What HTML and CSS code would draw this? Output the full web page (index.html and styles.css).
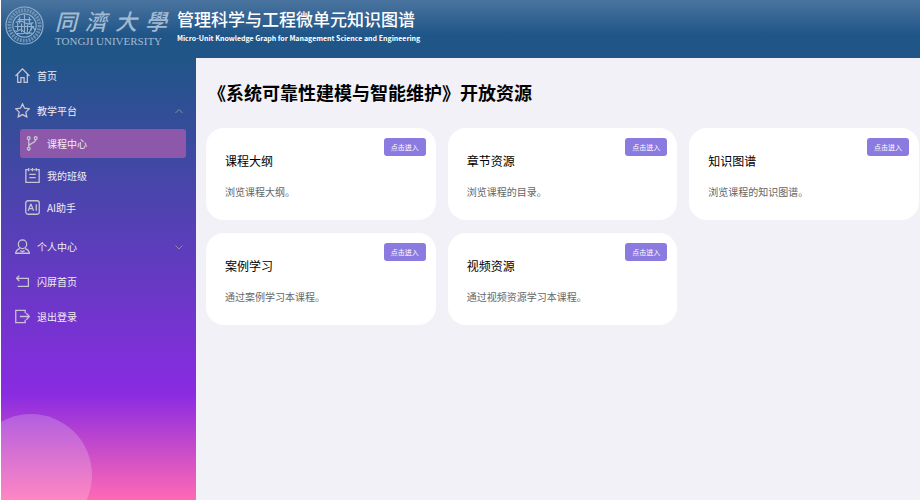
FILE: index.html
```html
<!DOCTYPE html>
<html lang="zh-CN">
<head>
  <meta charset="UTF-8">
  <meta name="viewport" content="width=device-width, initial-scale=1.0">
  <title>管理科学与工程微单元知识图谱</title>
  <link rel="stylesheet" href="styles.css">
</head>
<body>
  <header class="header">
    <svg class="emblem" viewBox="0 0 40 40" aria-hidden="true">
      <circle cx="20" cy="20" r="19"/>
      <circle cx="20" cy="20" r="12"/>
      <circle class="ring" cx="20" cy="20" r="15.500"/>
      <path d="M13 14h14M11 17q4-3 9 0t9 0M10 21h20M15 11v7M20 9v9M25 11v7M13 17v8M17 18v9M20 18v9M23 18v9M27 17v8"/>
      <path d="M9 25q3 2 5 0t6 2 6-2 5 0M12 28q4 1 8 0t8 0"/>
    </svg>
    <div class="school">
      <div class="school-cn"><span>同</span><span>濟</span><span>大</span><span>學</span></div>
      <div class="school-en">TONGJI UNIVERSITY</div>
    </div>
    <div class="site">
      <div class="site-cn">管理科学与工程微单元知识图谱</div>
      <div class="site-en">Micro-Unit Knowledge Graph for Management Science and Engineering</div>
    </div>
  </header>

  <div class="layout">
    <nav class="sidebar">
      <a class="item" href="#">
        <svg class="icon" viewBox="0 0 14 14"><path d="M.5 7.500 7 .8l6.500 6.700M2.500 6v7.500h3V9h3v4.500h3V6"/></svg>
        首页
      </a>
      <a class="item" href="#">
        <svg class="icon" viewBox="0 0 14 14"><path d="M7 .8l1.900 4.100 4.500.5-3.300 3.100.9 4.500L7 10.800 3 13l.9-4.500L.6 5.400l4.500-.5z"/></svg>
        教学平台
        <svg class="arrow" viewBox="0 0 8 8"><path d="M.5 6 4 2.500 7.500 6"/></svg>
      </a>
      <div class="submenu">
        <a class="subitem active" href="#">
          <svg class="icon" viewBox="0 0 14 14"><circle cx="3.500" cy="2" r="1.300"/><circle cx="10" cy="2" r="1.300"/><circle cx="3.500" cy="12" r="1.300"/><path d="M3.500 3.300v7.400M10 3.300c0 3.500-5.500 3-6.400 6"/></svg>
          课程中心
        </a>
        <a class="subitem" href="#">
          <svg class="icon" viewBox="0 0 14 14"><path d="M3 1.500H.8v12h12.400v-12H11M5 1.500h1.500M8 1.500h1.500M3.500 0v3M7 0v3M10.500 0v3M4 6h6M4 9h6"/></svg>
          我的班级
        </a>
        <a class="subitem" href="#">
          <svg class="icon" viewBox="0 0 14 14"><rect x=".7" y=".7" width="12.600" height="12.600" rx="2"/><path d="M3 10l2.300-6h.4L8 10M3.800 8h3.400M10.500 4v6"/></svg>
          AI助手
        </a>
      </div>
      <a class="item" href="#">
        <svg class="icon" viewBox="0 0 14 14"><path d="M7 .8a3.600 3.800 0 0 1 0 8.200 3.600 3.800 0 0 1 0-8.200zM4.500 9C2 9.800.8 11 .6 13.300h12.800C13.200 11 12 9.800 9.500 9M5 10.800l2 1 2-1"/></svg>
        个人中心
        <svg class="arrow" viewBox="0 0 8 8"><path d="M.5 2.500 4 6l3.500-3.500"/></svg>
      </a>
      <a class="item" href="#">
        <svg class="icon" viewBox="0 0 14 14"><path d="M4 1.500 1.500 4 4 6.500M1.500 4h11v7.500H2.500"/></svg>
        闪屏首页
      </a>
      <a class="item" href="#">
        <svg class="icon" viewBox="0 0 14 14"><path d="M9.500 4V1.200H.7v11.600h8.800V10M4.500 7h9M10.500 4l3 3-3 3"/></svg>
        退出登录
      </a>
    </nav>

    <main class="content">
      <h1>《系统可靠性建模与智能维护》开放资源</h1>
      <div class="cards">
        <section class="card">
          <button class="enter">点击进入</button>
          <h2>课程大纲</h2>
          <p>浏览课程大纲。</p>
        </section>
        <section class="card">
          <button class="enter">点击进入</button>
          <h2>章节资源</h2>
          <p>浏览课程的目录。</p>
        </section>
        <section class="card">
          <button class="enter">点击进入</button>
          <h2>知识图谱</h2>
          <p>浏览课程的知识图谱。</p>
        </section>
        <section class="card">
          <button class="enter">点击进入</button>
          <h2>案例学习</h2>
          <p>通过案例学习本课程。</p>
        </section>
        <section class="card">
          <button class="enter">点击进入</button>
          <h2>视频资源</h2>
          <p>通过视频资源学习本课程。</p>
        </section>
      </div>
    </main>
  </div>
</body>
</html>
```
FILE: styles.css
```css
* {
  box-sizing: border-box;
}
body {
  margin: 0;
  padding-left: 1px;
  min-height: 100vh;
  display: flex;
  flex-direction: column;
  font-family: "Noto Sans CJK SC", sans-serif;
  background: #fff;
}
h1, h2, p {
  margin: 0;
}

/* header */
.header {
  display: flex;
  align-items: flex-start;
  height: 58px;
  padding: 6px 4px;
  background: linear-gradient(#4a749f, #205588 60%);
  color: #fff;
}
.emblem {
  width: 39px;
  height: 39px;
  fill: none;
  stroke: #94b0cb;
  stroke-width: 1.2;
}
.emblem .ring {
  stroke: #6d92b6;
  stroke-width: 4;
  stroke-dasharray: 2 1;
}
.school {
  width: 112px;
  margin: 0 10px 0 11px;
  color: #a3bbd2;
}
.school-cn {
  display: flex;
  justify-content: space-between;
  font-size: 22px;
  font-weight: 500;
  font-style: italic;
  line-height: 28px;
}
.school-en {
  font-family: "Liberation Serif", serif;
  font-size: 11px;
  line-height: 15px;
  white-space: nowrap;
}
.site {
  white-space: nowrap;
}
.site-cn {
  font-size: 17px;
  font-weight: 500;
  line-height: 26px;
}
.site-en {
  font-size: 7px;
  font-weight: 700;
  line-height: 12px;
}

/* sidebar */
.layout {
  flex: 1;
  display: flex;
}
.sidebar {
  position: relative;
  overflow: hidden;
  flex: 0 0 195px;
  background: linear-gradient(#205588, #8a2be2 76%, #ff69b4);
}
.sidebar::after {
  content: "";
  position: absolute;
  left: -31px;
  bottom: -36px;
  width: 122px;
  height: 122px;
  border-radius: 50%;
  background: rgba(255, 255, 255, 0.2);
}
.item, .subitem {
  display: flex;
  align-items: center;
  gap: 7px;
  color: #f0edf5;
  font-size: 10px;
  text-decoration: none;
}
.item {
  height: 35px;
  padding: 0 13px 0 14px;
}
.submenu {
  display: grid;
  gap: 3px;
  padding: 1px 10px 7px 19px;
}
.subitem {
  height: 29px;
  padding-left: 5px;
  border-radius: 3px;
}
.subitem.active {
  background: #8d58aa;
}
.icon {
  width: 15px;
  height: 15px;
  fill: none;
  stroke: #c8c4d2;
  stroke-width: 1.2;
}
.arrow {
  width: 8px;
  height: 8px;
  margin-left: auto;
  fill: none;
  stroke: #8c8c9c;
}

/* content */
.content {
  flex: 1;
  padding: 21px 1px 22px 10px;
  background: #f2f1f7;
}
h1 {
  margin-bottom: 23px;
  padding-left: 2px;
  font-size: 18px;
  line-height: 26px;
  color: #000;
}
.cards {
  display: grid;
  grid-template-columns: repeat(3, 1fr);
  gap: 13px 12px;
}
.card {
  position: relative;
  padding: 23px 19px 19px;
  border-radius: 18px;
  background: #fff;
}
.card h2 {
  margin-bottom: 12px;
  font-size: 12px;
  font-weight: 400;
  line-height: 20px;
  color: #000;
}
.card p {
  font-size: 10px;
  line-height: 18px;
  color: #666;
}
.enter {
  position: absolute;
  top: 10px;
  right: 10px;
  padding: 4px 7px;
  border: none;
  border-radius: 3px;
  background: #8b7ae0;
  color: #fff;
  font-family: inherit;
  font-size: 7px;
  line-height: 10px;
  cursor: pointer;
}
```
